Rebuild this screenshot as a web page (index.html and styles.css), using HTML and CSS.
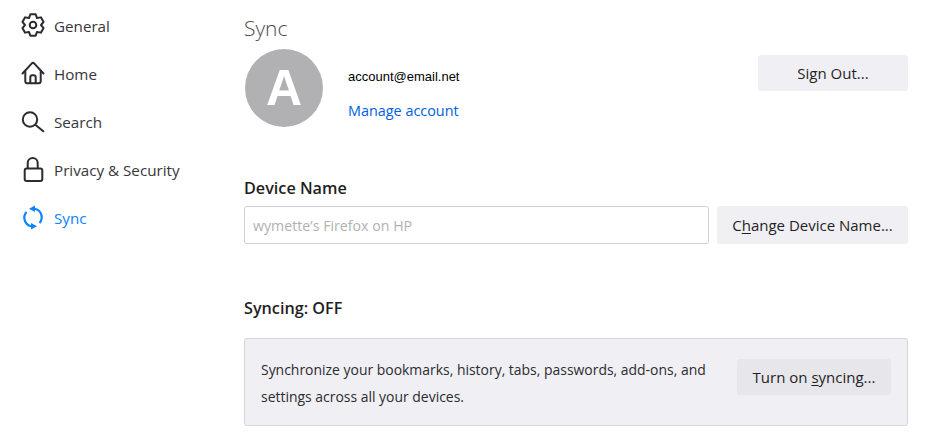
FILE: index.html
```html
<!DOCTYPE html>
<html lang="en">
<head>
<meta charset="utf-8">
<title>Sync</title>
<link rel="stylesheet" href="styles.css">
</head>
<body>
<div class="page">
  <nav class="nav">
    <a class="nav-item">
      <svg class="icon" viewBox="0 0 24 24" fill="none" stroke="currentColor" stroke-width="2" stroke-linejoin="round"><path d="M9.340 .330H14.660L16 4.070 19.910 3.360 22.570 7.970 20 11 22.570 14.030 19.910 18.640 16 17.930 14.660 21.670H9.340L8 17.930 4.090 18.640 1.430 14.030 4 11 1.430 7.970 4.090 3.360 8 4.070z"/><circle cx="12" cy="11" r="3.300"/></svg>
      <span>General</span>
    </a>
    <a class="nav-item">
      <svg class="icon" viewBox="0 0 24 24" fill="none" stroke="currentColor" stroke-width="2" stroke-linejoin="round" stroke-linecap="round"><path d="M1.500 11.500 10.600 1.600a2 2 0 0 1 2.800 0L22.500 11.500"/><path d="M4.300 9.500v9.800a2 2 0 0 0 2 2h11.400a2 2 0 0 0 2-2V9.500"/><path d="M9.300 21v-5.700a2 2 0 0 1 2-2h1.400a2 2 0 0 1 2 2V21"/></svg>
      <span>Home</span>
    </a>
    <a class="nav-item">
      <svg class="icon" viewBox="0 0 24 24" fill="none" stroke="currentColor" stroke-width="2" stroke-linecap="round"><circle cx="9" cy="9.500" r="7.200"/><path d="m14.300 14.800 8 6.500"/></svg>
      <span>Search</span>
    </a>
    <a class="nav-item">
      <svg class="icon" viewBox="0 0 24 24" fill="none" stroke="currentColor" stroke-width="2"><rect x="3.700" y="10.500" width="17.600" height="12.500" rx="2"/><path d="M6.700 10.500V5a5 5 0 0 1 10 0v5.500"/></svg>
      <span>Privacy &amp; Security</span>
    </a>
    <a class="nav-item is-active">
      <svg class="icon" viewBox="0 0 24 24" fill="none" stroke="currentColor" stroke-width="2.200"><path d="M14 2.800A8.700 8.700 0 0 1 18.500 17"/><path d="M10 20.200A8.700 8.700 0 0 1 5.500 6"/><path d="M8 2.800 14-.5V6.100z" fill="currentColor" stroke="none"/><path d="M16 20.200 10 23.500V16.900z" fill="currentColor" stroke="none"/></svg>
      <span>Sync</span>
    </a>
  </nav>
  <main class="main">
    <h1 class="title">Sync</h1>
    <section class="account">
      <div class="avatar">A</div>
      <div class="account-info">
        <div class="email">account@email.net</div>
        <a class="link">Manage account</a>
      </div>
      <button class="btn btn-signout">Si<u>g</u>n Out...</button>
    </section>
    <h2 class="heading heading-device">Device Name</h2>
    <div class="device-row">
      <input class="device-input" type="text" placeholder="wymette’s Firefox on HP">
      <button class="btn btn-change">C<u>h</u>ange Device Name...</button>
    </div>
    <h2 class="heading heading-syncing">Syncing: OFF</h2>
    <div class="sync-box">
      <p class="sync-text">Synchronize your bookmarks, history, tabs, passwords, add-ons, and settings across all your devices.</p>
      <button class="btn btn-turn-on">Turn on <u>s</u>yncing...</button>
    </div>
  </main>
</div>
</body>
</html>
```

FILE: styles.css
```css
* {
  box-sizing: border-box;
}

html,
body {
  margin: 0;
  height: 100%;
  background: #fff;
  overflow: hidden;
}

body {
  font-family: "Open Sans", "Noto Sans", sans-serif;
  font-size: 14px;
  color: #1f1f24;
}

.page {
  display: flex;
  width: 934px;
  height: 439px;
}

.nav {
  width: 244px;
  flex: none;
  padding-top: 2px;
  display: flex;
  flex-direction: column;
}

.nav-item {
  height: 48px;
  display: flex;
  align-items: center;
  gap: 9px;
  padding-left: 21px;
  color: #36363b;
  font-size: 15.200px;
}

.nav-item.is-active {
  color: #0a84ff;
}

.icon {
  width: 24px;
  height: 24px;
  flex: none;
  overflow: visible;
  color: #2b2b30;
}

.is-active .icon {
  color: #0a84ff;
}

.main {
  width: 664px;
  flex: none;
  display: flex;
  flex-direction: column;
}

.title {
  margin: 13px 0 0;
  height: 30px;
  line-height: 30px;
  font-size: 21px;
  font-weight: 300;
  color: #4a4a4f;
}

.account {
  margin-top: 6px;
  display: flex;
  align-items: flex-start;
}

.avatar {
  width: 78px;
  height: 78px;
  margin-left: 1px;
  border-radius: 50%;
  background: #b1b1b3;
  color: #fff;
  font-family: "Liberation Sans", sans-serif;
  font-weight: 700;
  font-size: 50px;
  line-height: 78px;
  text-align: center;
  flex: none;
}

.account-info {
  margin-left: 25px;
  flex: 1;
  padding-top: 20px;
}

.email {
  font-family: "Liberation Sans", sans-serif;
  font-size: 13px;
  line-height: 16px;
  color: #000;
}

.link {
  display: block;
  margin-top: 16px;
  line-height: 20px;
  font-size: 14.400px;
  color: #0060df;
}

.btn {
  font-family: inherit;
  font-size: 15px;
  color: #1f1f24;
  background: #f0f0f4;
  border: 0;
  border-radius: 3px;
  padding: 0;
}

.btn u {
  text-underline-offset: 2px;
}

.btn-signout {
  width: 150px;
  height: 36px;
  margin-top: 6px;
  flex: none;
}

.heading {
  margin: 0;
  font-size: 16.200px;
  font-weight: 600;
  line-height: 20px;
  color: #1f1f24;
}

.heading-device {
  margin-top: 51px;
}

.device-row {
  margin-top: 8px;
  display: flex;
  gap: 8px;
}

.device-input {
  flex: 1;
  min-width: 0;
  height: 38px;
  padding: 0 8px;
  font-family: inherit;
  font-size: 14.200px;
  border: 1px solid #cfcfd8;
  border-radius: 3px;
  background: #fff;
}

.device-input::placeholder {
  color: #b1b1b3;
  opacity: 1;
}

.btn-change {
  width: 191px;
  height: 38px;
  flex: none;
}

.heading-syncing {
  margin-top: 54px;
}

.sync-box {
  margin-top: 20px;
  height: 88px;
  display: flex;
  align-items: flex-start;
  justify-content: space-between;
  padding: 20px 16px 0;
  background: #f0f0f4;
  border: 1px solid #d7d7db;
  border-radius: 3px;
}

.sync-text {
  margin: -3px 0 0;
  width: 460px;
  font-size: 13.950px;
  line-height: 27px;
  color: #2b2b30;
}

.btn-turn-on {
  width: 154px;
  height: 36px;
  flex: none;
  background: #e6e6eb;
}
```
